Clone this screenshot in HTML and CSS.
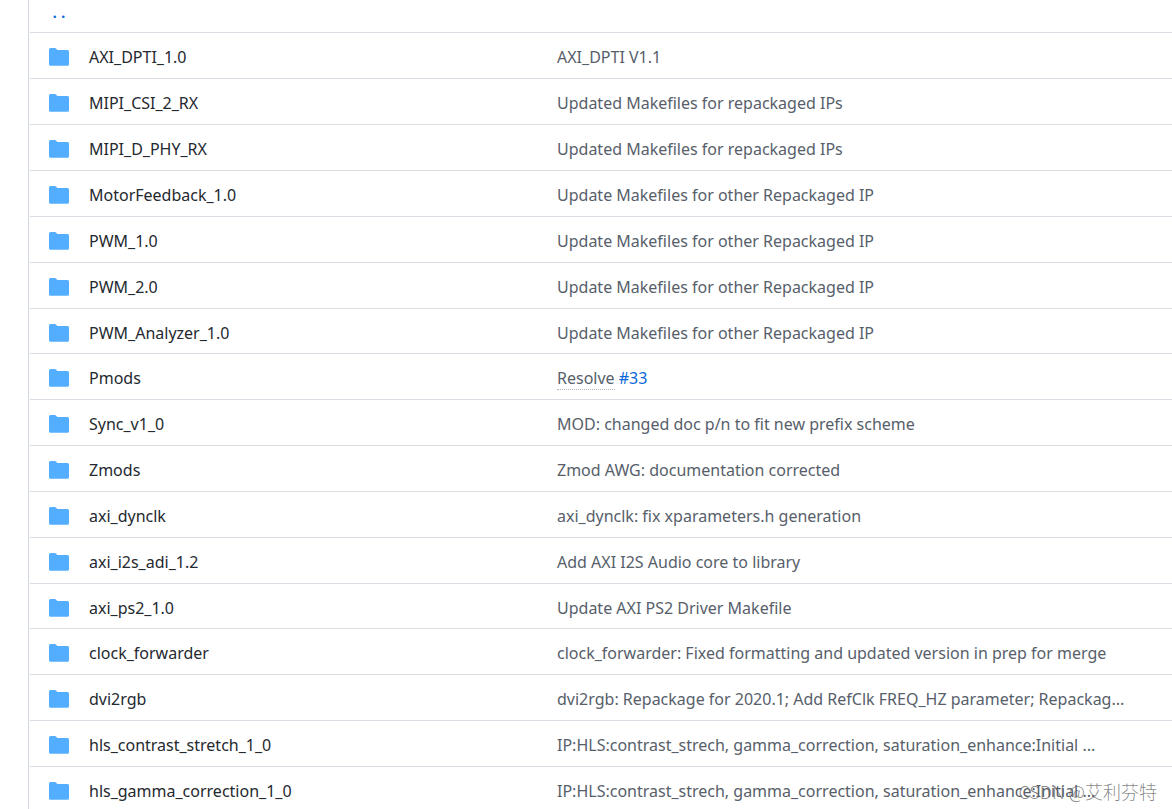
FILE: index.html
```html
<!DOCTYPE html>
<html lang="en">
<head>
<meta charset="utf-8">
<title>Files</title>
<link rel="stylesheet" href="styles.css">
</head>
<body>
<svg class="defs" aria-hidden="true"><symbol id="folder" viewBox="0 0 20 18"><path d="M1.500 0h4.200q1 0 1.600.8l.9 1.200h10.300A1.500 1.500 0 0 1 20 3.500v12.800a1.500 1.500 0 0 1-1.500 1.500h-17A1.500 1.500 0 0 1 0 16.300V1.500A1.500 1.500 0 0 1 1.500 0z"/></symbol></svg>
<main class="files">
<table class="list">
<tbody>
<tr class="parent"><td class="name"><a class="up" href="#">. .</a></td><td class="message"></td></tr>
<tr><td class="name"><div class="entry"><svg class="icon"><use href="#folder"/></svg><a href="#">AXI_DPTI_1.0</a></div></td><td class="message">AXI_DPTI V1.1</td></tr>
<tr><td class="name"><div class="entry"><svg class="icon"><use href="#folder"/></svg><a href="#">MIPI_CSI_2_RX</a></div></td><td class="message">Updated Makefiles for repackaged IPs</td></tr>
<tr><td class="name"><div class="entry"><svg class="icon"><use href="#folder"/></svg><a href="#">MIPI_D_PHY_RX</a></div></td><td class="message">Updated Makefiles for repackaged IPs</td></tr>
<tr><td class="name"><div class="entry"><svg class="icon"><use href="#folder"/></svg><a href="#">MotorFeedback_1.0</a></div></td><td class="message">Update Makefiles for other Repackaged IP</td></tr>
<tr><td class="name"><div class="entry"><svg class="icon"><use href="#folder"/></svg><a href="#">PWM_1.0</a></div></td><td class="message">Update Makefiles for other Repackaged IP</td></tr>
<tr><td class="name"><div class="entry"><svg class="icon"><use href="#folder"/></svg><a href="#">PWM_2.0</a></div></td><td class="message">Update Makefiles for other Repackaged IP</td></tr>
<tr><td class="name"><div class="entry"><svg class="icon"><use href="#folder"/></svg><a href="#">PWM_Analyzer_1.0</a></div></td><td class="message">Update Makefiles for other Repackaged IP</td></tr>
<tr><td class="name"><div class="entry"><svg class="icon"><use href="#folder"/></svg><a href="#">Pmods</a></div></td><td class="message"><span class="keyword">Resolve</span> <a class="issue" href="#">#33</a></td></tr>
<tr><td class="name"><div class="entry"><svg class="icon"><use href="#folder"/></svg><a href="#">Sync_v1_0</a></div></td><td class="message">MOD: changed doc p/n to fit new prefix scheme</td></tr>
<tr><td class="name"><div class="entry"><svg class="icon"><use href="#folder"/></svg><a href="#">Zmods</a></div></td><td class="message">Zmod AWG: documentation corrected</td></tr>
<tr><td class="name"><div class="entry"><svg class="icon"><use href="#folder"/></svg><a href="#">axi_dynclk</a></div></td><td class="message">axi_dynclk: fix xparameters.h generation</td></tr>
<tr><td class="name"><div class="entry"><svg class="icon"><use href="#folder"/></svg><a href="#">axi_i2s_adi_1.2</a></div></td><td class="message">Add AXI I2S Audio core to library</td></tr>
<tr><td class="name"><div class="entry"><svg class="icon"><use href="#folder"/></svg><a href="#">axi_ps2_1.0</a></div></td><td class="message">Update AXI PS2 Driver Makefile</td></tr>
<tr><td class="name"><div class="entry"><svg class="icon"><use href="#folder"/></svg><a href="#">clock_forwarder</a></div></td><td class="message">clock_forwarder: Fixed formatting and updated version in prep for merge</td></tr>
<tr><td class="name"><div class="entry"><svg class="icon"><use href="#folder"/></svg><a href="#">dvi2rgb</a></div></td><td class="message">dvi2rgb: Repackage for 2020.1; Add RefClk FREQ_HZ parameter; Repackag...</td></tr>
<tr><td class="name"><div class="entry"><svg class="icon"><use href="#folder"/></svg><a href="#">hls_contrast_stretch_1_0</a></div></td><td class="message">IP:HLS:contrast_strech, gamma_correction, saturation_enhance:Initial ...</td></tr>
<tr><td class="name"><div class="entry"><svg class="icon"><use href="#folder"/></svg><a href="#">hls_gamma_correction_1_0</a></div></td><td class="message">IP:HLS:contrast_strech, gamma_correction, saturation_enhance:Initial ...</td></tr>
</tbody>
</table>
</main>
<div class="watermark">CSDN @艾利芬特</div>
</body>
</html>
```
FILE: styles.css
```css
* { box-sizing: border-box; }
body {
  margin: 0;
  background: #fff;
  color: #24292f;
  font: 16px/24px "Noto Sans", "Open Sans", sans-serif;
  overflow: hidden;
}
.defs { position: absolute; width: 0; height: 0; }
.files { margin-left: 28px; padding-left: 1px; border-left: 1px solid #d0d7de; }
.list { width: 100%; border-spacing: 0; table-layout: fixed; }
.list td {
  height: 46px;
  padding: 3px 0 0;
  border-bottom: 1px solid #d8dee4;
  white-space: nowrap;
  vertical-align: middle;
}
/* Every sixth row is a pixel shorter to keep the average row pitch. */
.list tr:nth-child(6n+8) td { height: 45px; }
.list .parent td { height: 33px; padding-top: 0; padding-bottom: 8px; }
.list .name { width: 527px; padding-left: 19px; }
.list a { color: inherit; text-decoration: none; }
.entry { display: flex; align-items: center; gap: 20px; }
.icon { width: 20px; height: 18px; flex: none; fill: #54aeff; }
.message { color: #57606a; }
.list .up, .list .issue { color: #0969da; }
.list .up { display: block; width: 20px; text-align: center; font-weight: 600; }
.keyword { border-bottom: 1px dotted #afb8c1; }
.watermark {
  position: absolute;
  right: 15px;
  bottom: 6px;
  color: #606060c0;
  font: 300 18px/24px "Noto Sans CJK SC", sans-serif;
}
```
